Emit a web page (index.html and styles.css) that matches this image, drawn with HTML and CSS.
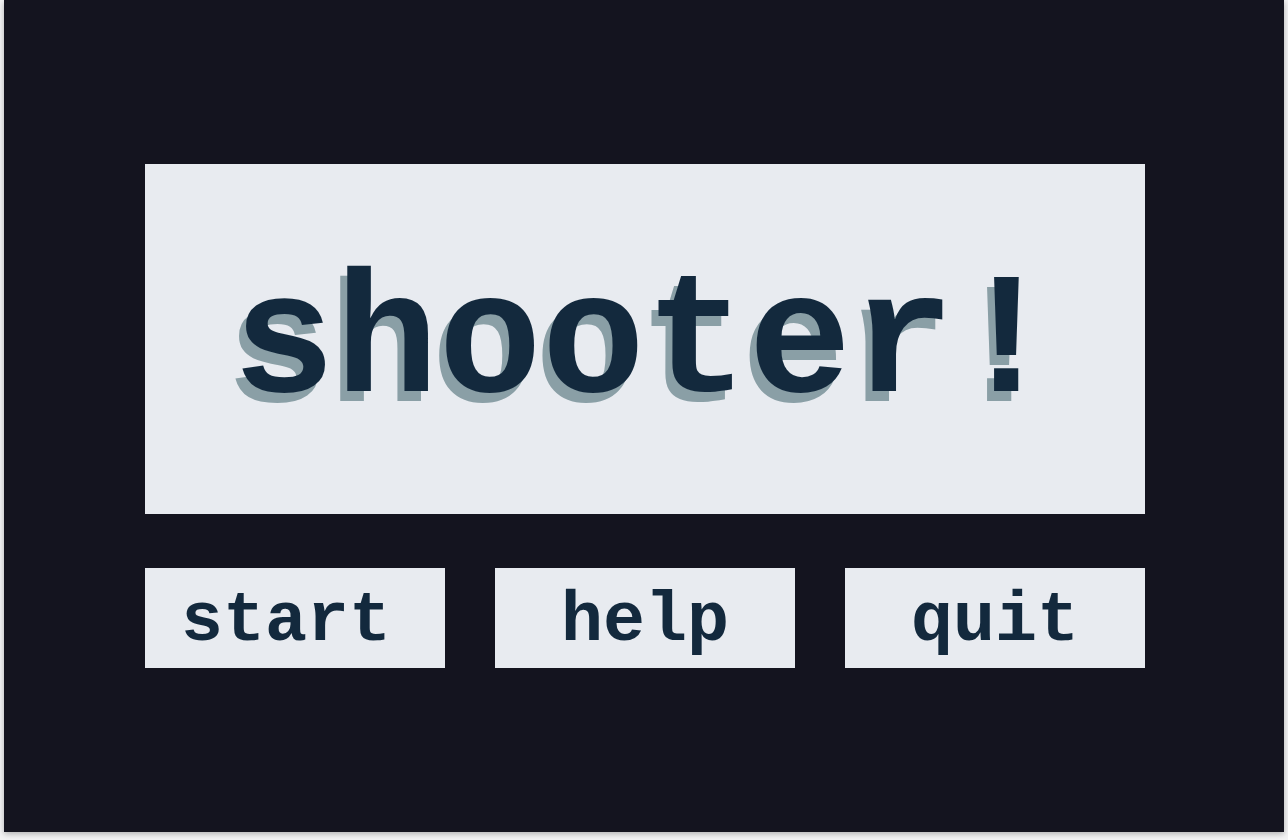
FILE: index.html
```html
<!DOCTYPE html>
<html>
<head>
<meta charset="utf-8">
<link rel="stylesheet" href="styles.css">
</head>
<body>
<div class="screen">
  <div class="menu">
    <div class="title"><span class="title-text">shooter!</span></div>
    <div class="buttons">
      <div class="btn btn-start">start</div>
      <div class="btn">help</div>
      <div class="btn">quit</div>
    </div>
  </div>
</div>
</body>
</html>
```
FILE: styles.css
```css
html, body {
  margin: 0;
  padding: 0;
  background: #f4f4f5;
}
body {
  padding: 0 4px 8px;
  width: 1280px;
}
.screen {
  width: 1280px;
  height: 832px;
  background: #14141f;
  box-shadow: 0 2px 6px rgba(0, 0, 0, 0.28);
  display: flex;
  align-items: center;
  justify-content: center;
}
.menu {
  width: 1000px;
  display: flex;
  flex-direction: column;
  gap: 54px;
  margin-left: 2px;
}
.title {
  height: 350px;
  box-sizing: border-box;
  padding-top: 14px;
  background: #e8ebf0;
  display: flex;
  align-items: center;
  justify-content: center;
}
.title-text {
  font-family: "Liberation Mono", "DejaVu Sans Mono", monospace;
  font-weight: bold;
  font-size: 172px;
  line-height: 1;
  color: #13293d;
  text-shadow: -7px 10px 0 #8a9fa6;
}
.buttons {
  display: flex;
  gap: 50px;
}
.btn {
  width: 300px;
  height: 100px;
  box-sizing: border-box;
  padding-top: 6px;
  background: #e8ebf0;
  display: flex;
  align-items: center;
  justify-content: center;
  font-family: "Liberation Mono", "DejaVu Sans Mono", monospace;
  font-weight: bold;
  font-size: 70px;
  color: #13293d;
}
.btn-start {
  padding-right: 18px;
}
```
